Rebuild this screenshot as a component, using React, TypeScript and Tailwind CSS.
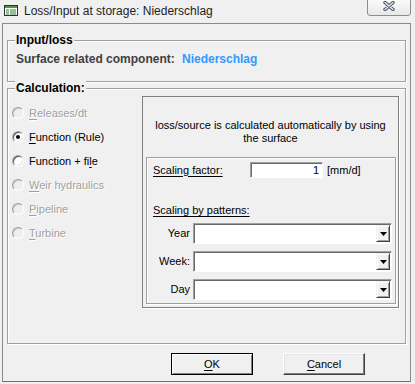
import type { ReactNode } from 'react';

/**
 * "Loss/Input at storage" dialog, classic Windows look.
 */

function Mn({ children }: { children: ReactNode }) {
  return <span className="underline underline-offset-[2px]">{children}</span>;
}

function Group({ label, className, children }: { label: string; className: string; children?: ReactNode }) {
  return (
    <div className={`relative border border-[#a0a0a0] shadow-[inset_1px_1px_0_#fff,1px_1px_0_#fff] ${className}`}>
      <span className="absolute left-[7px] top-[-8px] bg-[#f0f0f0] px-[1px] text-[12px] font-bold leading-[14px] text-black">
        {label}
      </span>
      {children}
    </div>
  );
}

function Radio({ children, checked, disabled }: { children: ReactNode; checked?: boolean; disabled?: boolean }) {
  return (
    <div className="flex h-[24px] items-center">
      <span
        className={`relative flex h-[12px] w-[12px] items-center justify-center rounded-full border border-t-[#a0a0a0] border-l-[#a0a0a0] border-r-white border-b-white ${
          disabled
            ? 'bg-[#f0f0f0] shadow-[inset_1px_1px_0_#c8c8c8]'
            : 'bg-white shadow-[inset_1px_1px_0_#555,inset_-1px_-1px_0_#e3e3e3]'
        }`}
      >
        {checked && <span className="h-[4px] w-[4px] rounded-full bg-black" />}
      </span>
      <span
        className={`ml-[5px] text-[11px] leading-[13px] ${
          disabled ? 'text-[#a0a0a0] [text-shadow:1px_1px_0_#fff]' : 'text-black'
        }`}
      >
        {children}
      </span>
    </div>
  );
}

function Combo({ label }: { label: string }) {
  return (
    <div className="flex h-[21px] items-center">
      <span className="w-[43px] text-right text-[11px] leading-[13px]">{label}</span>
      <div className="ml-[3px] flex h-[21px] w-[199px] items-center justify-end border border-t-[#a0a0a0] border-l-[#a0a0a0] border-r-white border-b-white bg-white pr-[1px] shadow-[inset_1px_1px_0_#696969]">
        <div className="flex h-[17px] w-[14px] items-center justify-center border border-t-[#f0f0f0] border-l-[#f0f0f0] border-r-[#404040] border-b-[#404040] bg-[#f0f0f0] shadow-[inset_1px_1px_0_#fff,inset_-1px_-1px_0_#a0a0a0]">
          <svg width="7" height="4" viewBox="0 0 7 4">
            <path d="M0 0h7L3.5 4z" fill="#000" />
          </svg>
        </div>
      </div>
    </div>
  );
}

export default function App() {
  return (
    <div className="h-[384px] w-[415px] overflow-hidden bg-[#f0f0f0] font-['Liberation_Sans',Arial,sans-serif] text-black">
      {/* title bar */}
      <div className="flex h-[23px] items-start">
        <svg className="ml-[4px] mt-[5px]" width="14" height="11" viewBox="0 0 14 11">
          <rect x="0.5" y="0.5" width="13" height="10" fill="#fff" stroke="#2f2f2f" />
          <rect x="1" y="1" width="12" height="2" fill="#4c9a3c" />
          <path d="M2 5h3M6 5h6M2 7h3M6 7h6M2 9h3M6 9h6" stroke="#2e7d32" />
        </svg>
        <span className="ml-[6px] mt-[4px] text-[12px] leading-[15px] text-[#1e1e1e]">
          Loss/Input at storage: Niederschlag
        </span>
        <div className="ml-auto mr-[4px] mt-[-1px] flex h-[17px] w-[44px] items-start justify-center rounded-b-[3px] border border-[#8d8d8d] bg-gradient-to-b from-[#fafafa] to-[#e8e8e8] pt-[1px]">
          <svg width="12" height="10" viewBox="0 0 12 10">
            <path d="M2 1.5l8 7M10 1.5l-8 7" stroke="#4b5261" strokeWidth="3.4" strokeLinecap="round" />
            <path d="M2 1.5l8 7M10 1.5l-8 7" stroke="#eef0f4" strokeWidth="1.3" strokeLinecap="round" />
          </svg>
        </div>
      </div>

      {/* client frame */}
      <div className="ml-[2px] h-[359px] w-[409px] border border-[#8b8b8b] border-b-[#6e6e6e]">
        <Group label="Input/loss" className="ml-[4px] mt-[16px] h-[42px] w-[399px]">
          <div className="flex pl-[8px] pt-[11px] text-[12px] font-bold leading-[14px]">
            <span className="w-[166px] text-[#404040]">Surface related component:</span>
            <span className="text-[#3399ff]">Niederschlag</span>
          </div>
        </Group>

        <Group label="Calculation:" className="ml-[4px] mt-[6px] flex h-[256px] w-[399px]">
          <div className="w-[134px] pl-[4px] pt-[12px]">
            <Radio disabled>
              <Mn>R</Mn>eleases/dt
            </Radio>
            <Radio checked>
              <Mn>F</Mn>unction (Rule)
            </Radio>
            <Radio>
              Function + fi<Mn>l</Mn>e
            </Radio>
            <Radio disabled>
              <Mn>W</Mn>eir hydraulics
            </Radio>
            <Radio disabled>
              <Mn>P</Mn>ipeline
            </Radio>
            <Radio disabled>
              <Mn>T</Mn>urbine
            </Radio>
          </div>

          <div className="mt-[7px] h-[212px] w-[257px] border border-[#808080] shadow-[1px_1px_0_#fff]">
            <p className="mt-[22px] text-center text-[11px] leading-[13px]">
              loss/source is calculated automatically by using
              <br />
              the surface
            </p>
            <div className="ml-[3px] mt-[12px] h-[147px] w-[250px] border border-[#a0a0a0] shadow-[inset_1px_1px_0_#fff,1px_1px_0_#fff]">
              <div className="mt-[4px] flex h-[16px] items-center pl-[6px] text-[11px] leading-[13px]">
                <span className="w-[97px] underline underline-offset-[2px]">Scaling factor:</span>
                <div className="flex h-[16px] w-[73px] items-center justify-end border border-t-[#a0a0a0] border-l-[#a0a0a0] border-r-white border-b-white bg-white pr-[3px] shadow-[inset_1px_1px_0_#696969]">
                  1
                </div>
                <span className="ml-[4px]">[mm/d]</span>
              </div>
              <div className="mt-[26px] pl-[6px] text-[11px] leading-[13px] underline underline-offset-[2px]">
                Scaling by patterns:
              </div>
              <div className="mt-[6px] flex flex-col gap-[7px]">
                <Combo label="Year" />
                <Combo label="Week:" />
                <Combo label="Day" />
              </div>
            </div>
          </div>
        </Group>

        {/* buttons */}
        <div className="mt-[9px] flex text-[11px] leading-[13px]">
          <button className="ml-[168px] flex h-[22px] w-[82px] items-center justify-center border border-black bg-[#f0f0f0] shadow-[inset_1px_1px_0_#fff,inset_-1px_-1px_0_#808080]">
            <Mn>O</Mn>K
          </button>
          <button className="ml-[30px] flex h-[22px] w-[82px] items-center justify-center border border-t-white border-l-white border-r-[#404040] border-b-[#404040] bg-[#f0f0f0] shadow-[inset_-1px_-1px_0_#808080,inset_1px_1px_0_#e3e3e3]">
            <Mn>C</Mn>ancel
          </button>
        </div>
      </div>
    </div>
  );
}
